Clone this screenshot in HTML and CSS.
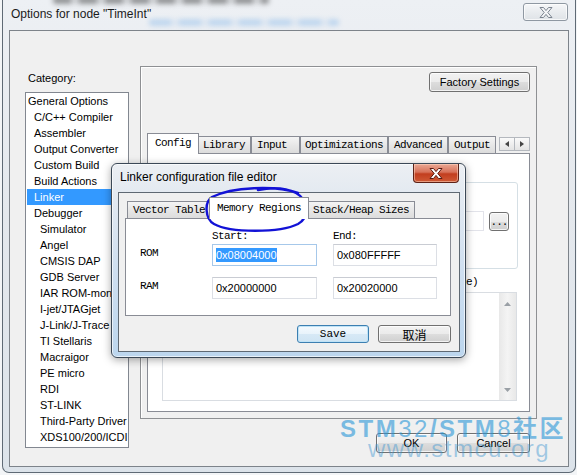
FILE: index.html
```html
<!DOCTYPE html>
<html lang="en">
<head>
  <meta charset="UTF-8">
  <title>Options for node "TimeInt"</title>
  <link rel="stylesheet" href="styles.css">
</head>
<body>
<div class="desk">

  <!-- Options window -->
  <div class="window">
    <div class="titlebar">
      <span class="haze haze-dark"></span>
      <span class="haze haze-blue"></span>
      <span class="title">Options for node "TimeInt"</span>
      <span class="close close-idle">
        <svg width="14" height="11" viewBox="0 0 14 11"><path d="M1 .5h3.5L7 3.6 9.5.5H13L8.8 5.5 13 10.5H9.5L7 7.4 4.5 10.5H1l4.2-5z" fill="#f4f5f7" stroke="#7b8490" stroke-width="1"/></svg>
      </span>
    </div>

    <div class="client">
      <!-- Category tree -->
      <div class="side">
        <div class="cat-label">Category:</div>
        <ul class="cat-list">
          <li class="lvl0">General Options</li>
          <li class="lvl1">C/C++ Compiler</li>
          <li class="lvl1">Assembler</li>
          <li class="lvl1">Output Converter</li>
          <li class="lvl1">Custom Build</li>
          <li class="lvl1">Build Actions</li>
          <li class="lvl1 sel">Linker</li>
          <li class="lvl1">Debugger</li>
          <li class="lvl2">Simulator</li>
          <li class="lvl2">Angel</li>
          <li class="lvl2">CMSIS DAP</li>
          <li class="lvl2">GDB Server</li>
          <li class="lvl2">IAR ROM-monitor</li>
          <li class="lvl2">I-jet/JTAGjet</li>
          <li class="lvl2">J-Link/J-Trace</li>
          <li class="lvl2">TI Stellaris</li>
          <li class="lvl2">Macraigor</li>
          <li class="lvl2">PE micro</li>
          <li class="lvl2">RDI</li>
          <li class="lvl2">ST-LINK</li>
          <li class="lvl2">Third-Party Driver</li>
          <li class="lvl2">XDS100/200/ICDI</li>
        </ul>
      </div>

      <!-- Settings for the selected category -->
      <div class="main">
        <div class="group">
          <div class="group-head">
            <button class="btn btn-factory">Factory Settings</button>
          </div>
          <div class="tabs">
            <span class="tab on">Config</span>
            <span class="tab">Library</span>
            <span class="tab tab-input">Input</span>
            <span class="tab tab-opt">Optimizations</span>
            <span class="tab">Advanced</span>
            <span class="tab">Output</span>
            <span class="tab-spin">
              <span class="spin-btn"><svg width="4" height="6" viewBox="0 0 4 6"><path d="M4 0v6L0 3z" fill="#444"/></svg></span>
              <span class="spin-btn"><svg width="4" height="6" viewBox="0 0 4 6"><path d="M0 0v6l4-3z" fill="#444"/></svg></span>
            </span>
          </div>
          <div class="page">
            <div class="cfg-box">
              <div class="cfg-row">
                <span class="cfg-path"></span>
                <button class="btn btn-dots">...</button>
              </div>
            </div>
            <div class="cfg-label">(one per line)</div>
            <div class="cfg-list">
              <div class="vscroll">
                <svg width="7" height="4" viewBox="0 0 7 4"><path d="M0 4L3.5 0 7 4z" fill="#9aa0a6"/></svg>
                <svg width="7" height="4" viewBox="0 0 7 4"><path d="M0 0l3.5 4L7 0z" fill="#9aa0a6"/></svg>
              </div>
            </div>
          </div>
        </div>
        <div class="actions">
          <button class="btn btn-ok">OK</button>
          <button class="btn btn-cancel">Cancel</button>
        </div>
      </div>
    </div>
  </div>

  <!-- Linker configuration file editor -->
  <div class="dialog">
    <div class="dlg-bar">
      <span class="dlg-title">Linker configuration file editor</span>
      <span class="close close-hot">
        <svg width="14" height="11" viewBox="0 0 14 11"><path d="M1 .5h3.5L7 3.6 9.5.5H13L8.8 5.5 13 10.5H9.5L7 7.4 4.5 10.5H1l4.2-5z" fill="#fff" stroke="#5a1a10" stroke-width="1"/></svg>
      </span>
    </div>
    <div class="dlg-client">
      <div class="tabs tabs-small">
        <span class="tab">Vector Table</span>
        <span class="tab on">Memory Regions</span>
        <span class="tab">Stack/Heap Sizes</span>
      </div>
      <div class="page page-small">
        <div class="reg-head">
          <span></span>
          <span>Start:</span>
          <span>End:</span>
        </div>
        <div class="reg-grid">
          <span class="reg-name">ROM</span>
          <span class="field field-focus"><span class="picked">0x08004000</span></span>
          <span class="field">0x080FFFFF</span>
          <span class="reg-name">RAM</span>
          <span class="field">0x20000000</span>
          <span class="field">0x20020000</span>
        </div>
      </div>
      <div class="dlg-actions">
        <button class="btn btn-save">Save</button>
        <button class="btn btn-cn">取消</button>
      </div>
    </div>
  </div>

  <!-- hand drawn loop around the active tab -->
  <svg class="scribble" width="577" height="475" viewBox="0 0 577 475">
    <path d="M298 193C275 185 232 187 212 197C204 202 205 219 214 224C230 233 280 233 298 224C309 218 309 200 296 193C284 187 268 188 258 190" fill="none" stroke="#1212d6" stroke-width="2.4" stroke-linecap="round"/>
  </svg>

  <div class="watermark">
    <div><b>STM</b>32<b>/STM</b>8<b>社区</b></div>
    <div class="wm-url">www.stmcu.org</div>
  </div>
</div>
</body>
</html>
```

FILE: styles.css
```css
* {
  box-sizing: border-box;
}

body {
  margin: 0;
  background: #f3f5f7;
  font-family: "Liberation Sans", Arial, sans-serif;
  font-size: 11px;
  color: #000;
}

.desk {
  position: relative;
  width: 577px;
  height: 475px;
  overflow: hidden;
}

/* Outer window (inactive glass) */
.window {
  margin-left: 2px;
  width: 574px;
  height: 473px;
  display: flex;
  flex-direction: column;
  padding: 0 6px 5px;
  border: 1px solid #5f6a75;
  border-top: none;
  border-radius: 0 0 7px 7px;
  background: linear-gradient(180deg, #edf0f4 0%, #e4e8ed 45%, #dce3ea 100%);
}

.titlebar {
  position: relative;
  height: 30px;
  display: flex;
  align-items: flex-start;
}

/* whatever sits behind the glass, smeared */
.haze {
  position: absolute;
  border-radius: 3px;
  filter: blur(2.5px);
  pointer-events: none;
}

.haze-dark {
  left: 44px;
  top: -4px;
  width: 216px;
  height: 8px;
  background: repeating-linear-gradient(90deg, rgba(40, 40, 40, 0.45) 0 18px, rgba(40, 40, 40, 0.15) 18px 26px);
}

.haze-blue {
  left: 140px;
  top: 19px;
  width: 190px;
  height: 7px;
  background: repeating-linear-gradient(90deg, rgba(90, 160, 230, 0.3) 0 22px, rgba(90, 160, 230, 0.1) 22px 30px);
}

.title {
  position: relative;
  z-index: 1;
  padding: 6px 0 0 2px;
  font-size: 12px;
  line-height: 16px;
  color: #1b1b1b;
}

.close {
  display: flex;
  align-items: center;
  justify-content: center;
  margin-left: auto;
}

.close-idle {
  position: relative;
  margin-top: 3px;
  margin-right: 1px;
  width: 45px;
  height: 18px;
  border: 1px solid #8f98a2;
  border-radius: 3px;
  background: linear-gradient(180deg, #f6f7f9 0%, #e9ecef 50%, #dfe3e7 100%);
  box-shadow: inset 0 0 0 1px rgba(255, 255, 255, 0.7);
}

/* Client area */
.client {
  flex: 1;
  display: flex;
  border: 1px solid #7d838a;
  background: #f0f0f0;
}

.side {
  margin-left: 15px;
  width: 104px;
}

.cat-label {
  margin-top: 39px;
  padding-left: 3px;
  line-height: 16px;
}

.cat-list {
  list-style: none;
  margin: 6px 0 0;
  padding: 0;
  height: 356px;
  border: 1px solid #828790;
  background: #fff;
  overflow: hidden;
}

.cat-list li {
  height: 16px;
  line-height: 16px;
  margin-left: 1px;
  white-space: nowrap;
  overflow: hidden;
}

.cat-list .lvl0 { padding-left: 1px; }
.cat-list .lvl1 { padding-left: 7px; }
.cat-list .lvl2 { padding-left: 13px; }

.cat-list .sel {
  background: #3399ff;
  color: #fff;
}

.main {
  margin-left: 11px;
  width: 397px;
}

.group {
  margin-top: 35px;
  height: 353px;
  padding: 5px 6px 6px;
  border: 1px solid #8e9093;
  box-shadow: inset 1px 1px 0 #fff;
}

.group-head {
  display: flex;
  justify-content: flex-end;
}

/* Buttons */
.btn {
  height: 20px;
  padding: 0;
  border: 1px solid #707070;
  border-radius: 3px;
  background: linear-gradient(180deg, #f2f2f2 0%, #ebebeb 50%, #dddddd 51%, #cfcfcf 100%);
  box-shadow: inset 0 0 0 1px rgba(255, 255, 255, 0.75);
  font-family: "Liberation Sans", Arial, sans-serif;
  font-size: 11px;
  color: #000;
}

.btn-factory { width: 101px; }
.btn-ok { width: 71px; }
.btn-cancel { width: 73px; }

/* Tab strips */
.tabs {
  display: flex;
  align-items: flex-end;
  height: 20px;
  margin-top: 41px;
  padding-left: 2px;
  font-family: "Liberation Mono", "Courier New", monospace;
  font-size: 11px;
  letter-spacing: -0.6px;
}

.tab {
  height: 17px;
  line-height: 16px;
  padding: 0 5px;
  border: 1px solid #898c95;
  border-bottom: none;
  background: linear-gradient(180deg, #f4f4f4 0%, #e6e6e6 55%, #dcdcdc 100%);
  white-space: nowrap;
}

.tab.on {
  position: relative;
  z-index: 1;
  height: 21px;
  margin: 0 -2px -1px;
  padding: 0 7px;
  line-height: 18px;
  background: #fff;
}

.tab-input { padding-right: 12px; }
.tab-opt { padding: 0 4px; }

.tab-spin {
  display: flex;
  margin-left: auto;
  margin-bottom: 2px;
}

.spin-btn {
  display: flex;
  align-items: center;
  justify-content: center;
  width: 16px;
  height: 14px;
  border: 1px solid #b4b8be;
  background: linear-gradient(180deg, #fafafa, #e4e4e4);
}

.spin-btn + .spin-btn { margin-left: -1px; }

.page {
  height: 259px;
  border: 1px solid #898c95;
  background: #fff;
}

/* Config page contents */
.cfg-box {
  margin: 28px 0 0 15px;
  width: 355px;
  height: 87px;
  padding: 28px 8px 0 14px;
  border: 1px solid #d5dfe5;
  border-radius: 3px;
}

.cfg-row {
  display: flex;
  gap: 5px;
}

.cfg-path {
  flex: 1;
  height: 20px;
  border: 1px solid #e2e3ea;
}

.btn-dots {
  width: 20px;
  height: 19px;
  margin-top: 1px;
  font-family: "Liberation Mono", monospace;
  letter-spacing: -1px;
}

/* tail of the symbol definitions caption, the rest sits under the editor */
.cfg-label {
  margin: 5px 51px 0 0;
  line-height: 16px;
  text-align: right;
  font-family: "Liberation Mono", "Courier New", monospace;
  letter-spacing: -0.6px;
  white-space: nowrap;
}

.cfg-list {
  display: flex;
  justify-content: flex-end;
  margin: 2px 0 0 14px;
  width: 355px;
  height: 109px;
  border: 1px solid #d9dde2;
}

.vscroll {
  display: flex;
  flex-direction: column;
  justify-content: space-between;
  align-items: center;
  width: 17px;
  padding: 9px 0 8px;
  background: linear-gradient(90deg, #e8e8e8, #f4f4f4 50%, #e8e8e8);
}

.actions {
  display: flex;
  justify-content: flex-end;
  gap: 10px;
  margin-top: 14px;
  padding-right: 7px;
}

/* Linker configuration file editor (active glass) */
.dialog {
  position: absolute;
  left: 111px;
  top: 163px;
  width: 355px;
  height: 195px;
  display: flex;
  flex-direction: column;
  padding: 0 5px 5px 6px;
  border: 1px solid #3b4856;
  border-radius: 6px;
  background: linear-gradient(180deg, #eceff3 0%, #e4eaf1 14%, #cfdff0 55%, #bcd6ee 100%);
  box-shadow: 0 2px 8px rgba(0, 0, 0, 0.35), inset 0 0 0 1px rgba(255, 255, 255, 0.65);
}

.dlg-bar {
  height: 28px;
  display: flex;
  align-items: flex-start;
}

.dlg-title {
  padding: 5px 0 0 2px;
  font-size: 12px;
  line-height: 16px;
}

.close-hot {
  margin-right: 1px;
  width: 46px;
  height: 19px;
  border: 1px solid #5d2217;
  border-top: none;
  border-radius: 0 0 4px 4px;
  background: linear-gradient(180deg, #eaa894 0%, #d7725a 45%, #c23e1f 55%, #cf5a36 100%);
  box-shadow: inset 0 0 0 1px rgba(255, 220, 200, 0.5);
}

.dlg-client {
  flex: 1;
  display: flex;
  flex-direction: column;
  padding: 4px 8px 0 6px;
  border: 1px solid #5f6973;
  background: #f0f0f0;
}

.tabs-small {
  height: 21px;
  margin-top: 0;
}

.tabs-small .tab.on {
  height: 22px;
  line-height: 20px;
}

.page-small {
  height: 98px;
  padding: 11px 0 0 14px;
}

.reg-head,
.reg-grid {
  display: grid;
  grid-template-columns: 56px 105px 104px;
  column-gap: 16px;
  font-family: "Liberation Mono", "Courier New", monospace;
  font-size: 11px;
  letter-spacing: -0.6px;
}

.reg-head {
  height: 14px;
  line-height: 12px;
}

.reg-grid {
  grid-auto-rows: 22px;
  row-gap: 11px;
}

.reg-name {
  line-height: 19px;
}

.field {
  height: 22px;
  padding-left: 3px;
  line-height: 20px;
  border: 1px solid #dcdfe5;
  border-top-color: #c9ccd3;
  background: #fff;
  font-family: "Liberation Sans", Arial, sans-serif;
  letter-spacing: 0;
}

.field-focus {
  border-color: #a6c8ea;
}

.picked {
  display: inline-block;
  line-height: 14px;
  background: #3399ff;
  color: #fff;
}

.dlg-actions {
  display: flex;
  justify-content: flex-end;
  gap: 9px;
  margin-top: 9px;
}

.btn-save {
  width: 72px;
  height: 18px;
  border-color: #3c7fb1;
  background: linear-gradient(180deg, #f4fafe 0%, #e8f3fb 50%, #d7e9f6 51%, #cfe4f3 100%);
  box-shadow: inset 0 0 0 1px #bfe3f7;
  font-family: "Liberation Mono", "Courier New", monospace;
}

.btn-cn {
  width: 73px;
  height: 18px;
  font-family: "Noto Sans CJK SC", sans-serif;
  font-size: 12px;
}

.scribble {
  position: absolute;
  left: 0;
  top: 0;
  pointer-events: none;
}

/* site stamp */
.watermark {
  position: absolute;
  left: 340px;
  top: 419px;
  font-family: "Liberation Sans", Arial, "Noto Sans CJK SC", sans-serif;
  font-size: 24px;
  line-height: 20px;
  letter-spacing: 2.5px;
  color: rgba(40, 150, 215, 0.6);
  white-space: nowrap;
  pointer-events: none;
}

.wm-url {
  padding-left: 28px;
  letter-spacing: 1.5px;
  color: rgba(60, 150, 210, 0.45);
}
```
